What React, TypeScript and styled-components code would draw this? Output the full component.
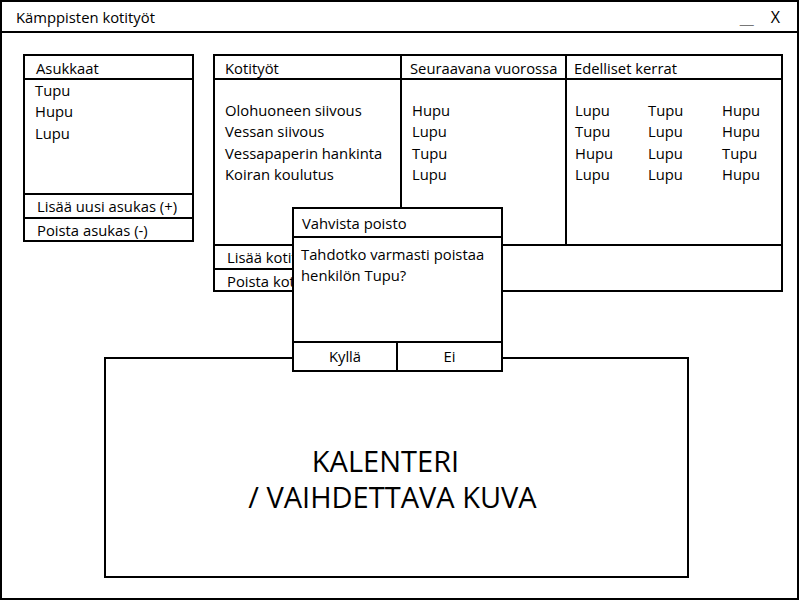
import styled, { createGlobalStyle } from "styled-components";

const GlobalStyle = createGlobalStyle`
  html, body {
    margin: 0;
    padding: 0;
    background: #fff;
  }
  body {
    font-family: "Open Sans", "Noto Sans", sans-serif;
    font-size: 14.8px;
    color: #000;
  }
  * {
    box-sizing: border-box;
  }
`;

const residents = ["Tupu", "Hupu", "Lupu"];

const chores = [
  { name: "Olohuoneen siivous", next: "Hupu", history: ["Lupu", "Tupu", "Hupu"] },
  { name: "Vessan siivous", next: "Lupu", history: ["Tupu", "Lupu", "Hupu"] },
  { name: "Vessapaperin hankinta", next: "Tupu", history: ["Hupu", "Lupu", "Tupu"] },
  { name: "Koiran koulutus", next: "Lupu", history: ["Lupu", "Lupu", "Hupu"] },
];

export default function App() {
  return (
    <>
      <GlobalStyle />
      <Window>
        <TitleBar>
          <Title>Kämppisten kotityöt</Title>
          <Controls>
            <Minimize>__</Minimize>
            <Close>X</Close>
          </Controls>
        </TitleBar>
        <Content>
          <TopRow>
            <Residents>
              <HeaderCell $pad={11}>Asukkaat</HeaderCell>
              <List>
                {residents.map((r) => (
                  <Row key={r}>{r}</Row>
                ))}
              </List>
              <ActionRow>Lisää uusi asukas (+)</ActionRow>
              <ActionRow $last>Poista asukas (-)</ActionRow>
            </Residents>
            <Chores>
              <HeaderCell $divider $pad={10}>Kotityöt</HeaderCell>
              <HeaderCell $divider $pad={8}>Seuraavana vuorossa</HeaderCell>
              <HeaderCell $pad={7}>Edelliset kerrat</HeaderCell>
              <ChoreColumn $divider>
                {chores.map((c) => (
                  <Row key={c.name}>{c.name}</Row>
                ))}
              </ChoreColumn>
              <ChoreColumn $divider>
                {chores.map((c, i) => (
                  <Row key={i}>{c.next}</Row>
                ))}
              </ChoreColumn>
              <HistoryColumn>
                {chores.map((c) =>
                  c.history.map((h, j) => <Row key={c.name + j}>{h}</Row>)
                )}
              </HistoryColumn>
              <ChoreFooter>
                <ActionRow>Lisää kotityö (+)</ActionRow>
                <ActionRow $last>Poista kotityö (-)</ActionRow>
              </ChoreFooter>
            </Chores>
          </TopRow>
          <Calendar>
            <CalendarText>
              <FirstLine>KALENTERI</FirstLine>
              <br />/ VAIHDETTAVA KUVA
            </CalendarText>
          </Calendar>
        </Content>
        <Dialog>
          <DialogTitle>Vahvista poisto</DialogTitle>
          <DialogBody>Tahdotko varmasti poistaa henkilön Tupu?</DialogBody>
          <DialogButtons>
            <DialogButton $divider>Kyllä</DialogButton>
            <DialogButton>Ei</DialogButton>
          </DialogButtons>
        </Dialog>
      </Window>
    </>
  );
}

const Window = styled.div`
  position: relative;
  width: 799px;
  height: 600px;
  border: 2px solid #000;
  display: flex;
  flex-direction: column;
  overflow: hidden;
`;

const TitleBar = styled.div`
  height: 31px;
  flex-shrink: 0;
  border-bottom: 2px solid #000;
  display: flex;
  align-items: center;
  justify-content: space-between;
  padding: 0 17px 0 14px;
`;

const Title = styled.span`
  font-size: 14.8px;
`;

const Controls = styled.div`
  display: flex;
  align-items: center;
  gap: 18px;
`;

const Minimize = styled.span`
  color: #777;
  font-size: 17px;
  letter-spacing: -1px;
  position: relative;
  top: 1px;
`;

const Close = styled.span`
  font-size: 16px;
`;

const Content = styled.div`
  padding: 21px 14px 0 21px;
  display: flex;
  flex-direction: column;
`;

const TopRow = styled.div`
  display: flex;
  align-items: flex-start;
  gap: 19px;
`;

const Residents = styled.div`
  width: 171px;
  height: 188px;
  border: 2px solid #000;
  display: flex;
  flex-direction: column;
`;

const HeaderCell = styled.div<{ $divider?: boolean; $pad: number }>`
  height: 24px;
  border-bottom: 2px solid #000;
  border-right: ${(p) => (p.$divider ? "2px solid #000" : "none")};
  padding-left: ${(p) => p.$pad}px;
  line-height: 24px;
  white-space: nowrap;
`;

const List = styled.div`
  flex: 1;
  padding: 0 0 0 10px;
  border-bottom: 2px solid #000;
`;

const Row = styled.div`
  height: 21.3px;
  line-height: 20px;
  white-space: nowrap;
`;

const ActionRow = styled.div<{ $last?: boolean }>`
  height: ${(p) => (p.$last ? "21px" : "24px")};
  line-height: 22px;
  padding-left: 12px;
  border-bottom: ${(p) => (p.$last ? "none" : "2px solid #000")};
  white-space: nowrap;
`;

const Chores = styled.div`
  width: 570px;
  height: 238px;
  border: 2px solid #000;
  display: grid;
  grid-template-columns: 187px 165px 1fr;
  grid-template-rows: 24px 1fr 46px;
`;

const ChoreColumn = styled.div<{ $divider?: boolean }>`
  border-right: ${(p) => (p.$divider ? "2px solid #000" : "none")};
  padding: 20px 0 0 10px;
`;

const HistoryColumn = styled.div`
  display: grid;
  grid-template-columns: 73px 74px 1fr;
  align-content: start;
  padding: 20px 0 0 8px;
`;

const ChoreFooter = styled.div`
  grid-column: 1 / -1;
  border-top: 2px solid #000;
  display: flex;
  flex-direction: column;

  & > div {
    width: 187px;
  }
`;

const Calendar = styled.div`
  margin: 65px 0 0 81px;
  width: 585px;
  height: 221px;
  border: 2px solid #000;
  display: flex;
  align-items: center;
  justify-content: center;
  padding-top: 23px;
`;

const CalendarText = styled.div`
  font-size: 29px;
  line-height: 36px;
  text-align: center;
  margin-right: 8px;
`;

const FirstLine = styled.span`
  padding-right: 14px;
`;

const Dialog = styled.div`
  position: absolute;
  left: 290px;
  top: 205px;
  width: 211px;
  height: 165px;
  background: #fff;
  border: 2px solid #000;
  display: flex;
  flex-direction: column;
`;

const DialogTitle = styled.div`
  height: 29px;
  border-bottom: 2px solid #000;
  padding-left: 8px;
  line-height: 28px;
`;

const DialogBody = styled.div`
  flex: 1;
  padding: 6px 6px 0 7px;
  line-height: 21px;
  border-bottom: 2px solid #000;
`;

const DialogButtons = styled.div`
  height: 27px;
  display: grid;
  grid-template-columns: 104px 1fr;
`;

const DialogButton = styled.div<{ $divider?: boolean }>`
  border-right: ${(p) => (p.$divider ? "2px solid #000" : "none")};
  text-align: center;
  line-height: 27px;
`;
